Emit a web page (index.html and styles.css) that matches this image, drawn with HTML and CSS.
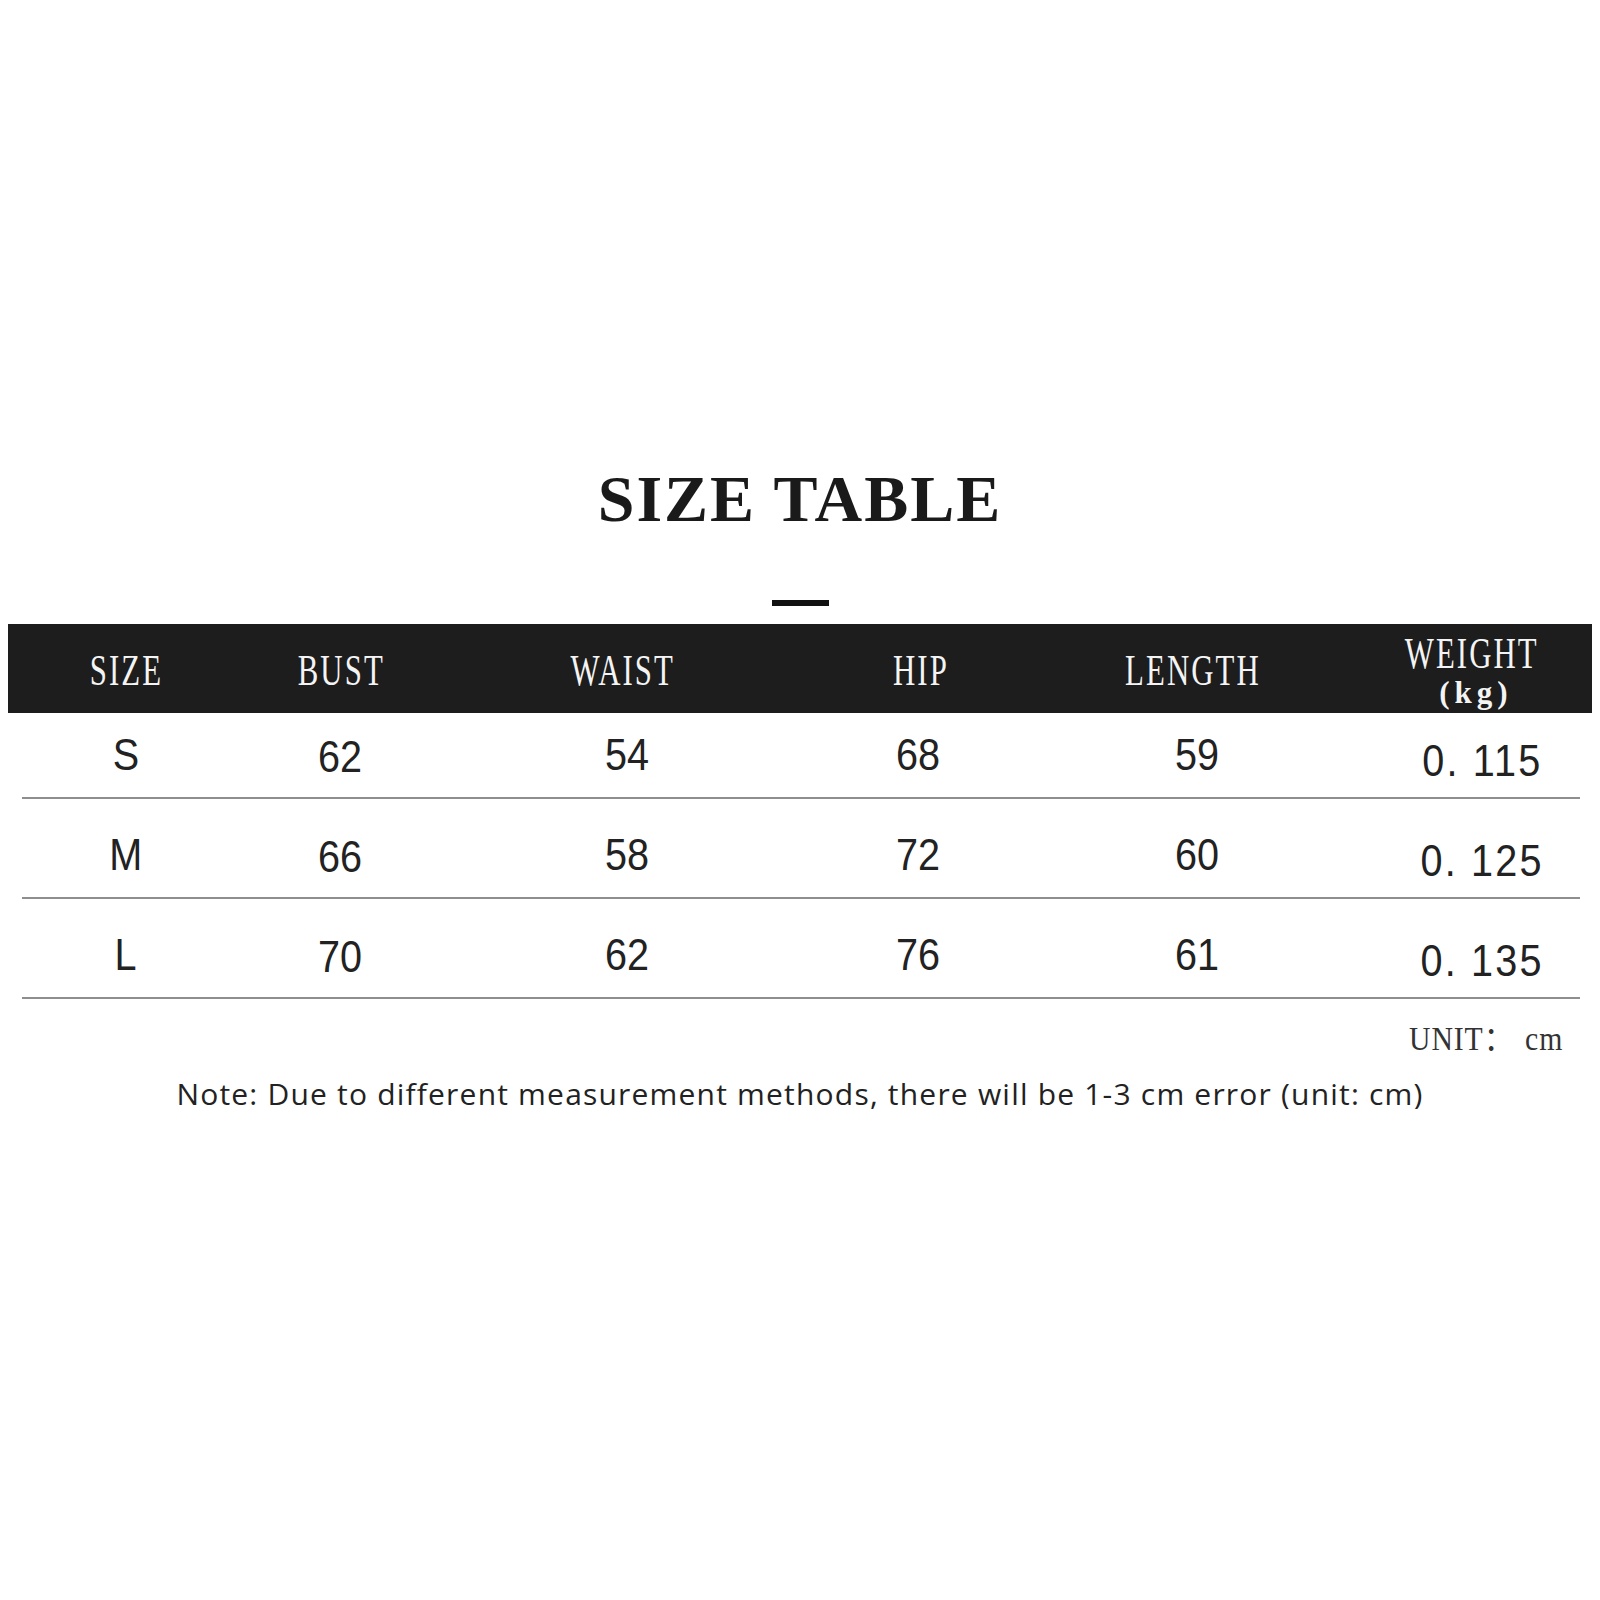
FILE: index.html
```html
<!DOCTYPE html>
<html lang="en">
<head>
<meta charset="utf-8">
<title>Size Table</title>
<link rel="stylesheet" href="styles.css">
</head>
<body>
<main class="sheet">
  <h1 class="title">SIZE TABLE</h1>
  <div class="dash"></div>
  <section class="table">
    <div class="thead">
      <div class="th"><span class="hd">SIZE</span></div>
      <div class="th"><span class="hd">BUST</span></div>
      <div class="th"><span class="hd">WAIST</span></div>
      <div class="th"><span class="hd">HIP</span></div>
      <div class="th"><span class="hd">LENGTH</span></div>
      <div class="th th-weight"><span class="hd w-top">WEIGHT</span><span class="hd w-unit">(kg)</span></div>
    </div>
    <div class="row row-first">
      <div class="td"><span class="num">S</span></div>
      <div class="td td-bust"><span class="num">62</span></div>
      <div class="td"><span class="num">54</span></div>
      <div class="td"><span class="num">68</span></div>
      <div class="td"><span class="num">59</span></div>
      <div class="td td-weight"><span class="num">0. 115</span></div>
    </div>
    <div class="row">
      <div class="td"><span class="num">M</span></div>
      <div class="td td-bust"><span class="num">66</span></div>
      <div class="td"><span class="num">58</span></div>
      <div class="td"><span class="num">72</span></div>
      <div class="td"><span class="num">60</span></div>
      <div class="td td-weight"><span class="num">0. 125</span></div>
    </div>
    <div class="row">
      <div class="td"><span class="num">L</span></div>
      <div class="td td-bust"><span class="num">70</span></div>
      <div class="td"><span class="num">62</span></div>
      <div class="td"><span class="num">76</span></div>
      <div class="td"><span class="num">61</span></div>
      <div class="td td-weight"><span class="num">0. 135</span></div>
    </div>
  </section>
  <div class="unit"><span class="unit-text">UNIT：<span class="unit-cm">cm</span></span></div>
  <p class="note">Note: Due to different measurement methods, there will be 1-3 cm error (unit: cm)</p>
</main>
</body>
</html>
```

FILE: styles.css
```css
html, body {
  background: #ffffff;
}

body {
  margin: 8px;
}

.sheet {
  width: 1584px;
  padding-top: 458px;
  display: flex;
  flex-direction: column;
}

.title {
  margin: 0;
  font-family: "Liberation Serif", "Times New Roman", serif;
  font-weight: bold;
  font-size: 66px;
  line-height: 66px;
  color: #1a1a1a;
  text-align: center;
  letter-spacing: 2px;
}

.dash {
  align-self: center;
  width: 57px;
  height: 6px;
  margin-top: 68px;
  background: #111111;
}

.table {
  margin-top: 18px;
  display: flex;
  flex-direction: column;
}

.thead {
  height: 89px;
  background: #1d1d1d;
  display: grid;
  grid-template-columns: 236px 194px 369px 227px 318px 240px;
  align-items: center;
}

.th {
  text-align: center;
  color: #f4f4f4;
  padding-top: 4px;
}

.hd {
  display: inline-block;
  font-family: "Liberation Serif", "Times New Roman", serif;
  font-size: 44px;
  line-height: 49px;
  letter-spacing: 3px;
  transform: scaleX(0.7);
  white-space: pre;
}

.th-weight {
  align-self: start;
  padding-top: 11px;
  display: flex;
  flex-direction: column;
  align-items: center;
}

.th-weight .w-top {
  line-height: 37px;
}

.th-weight .w-unit {
  margin-top: 4px;
  margin-left: 8px;
  font-size: 31px;
  font-weight: bold;
  line-height: 33px;
  letter-spacing: 5px;
  transform: none;
}

.row {
  margin: 0 12px 0 14px;
  height: 98px;
  border-bottom: 2px solid #8e8e8e;
  display: grid;
  grid-template-columns: 208px 221px 353px 228px 330px 218px;
  align-items: start;
}

.row-first {
  height: 84px;
}

.td {
  text-align: center;
  padding-top: 33px;
  color: #222222;
}

.row-first .td {
  padding-top: 19px;
}

.row .td-bust {
  padding-top: 35px;
}

.row-first .td-bust {
  padding-top: 21px;
}

.row .td-weight {
  padding-top: 39px;
  padding-left: 23px;
}

.row-first .td-weight {
  padding-top: 25px;
}

.num {
  display: inline-block;
  font-family: "Liberation Sans", Arial, sans-serif;
  font-size: 45px;
  line-height: 45px;
  transform: scaleX(0.88);
  white-space: pre;
}

.td-weight .num {
  letter-spacing: 2.5px;
}

.unit {
  margin-top: 21px;
  text-align: right;
  padding-right: 29px;
  color: #333333;
}

.unit-text {
  display: inline-block;
  font-family: "Liberation Serif", "Noto Sans CJK SC", serif;
  font-size: 33px;
  line-height: 38px;
  letter-spacing: 1px;
  transform: scaleX(0.9);
  transform-origin: right center;
  white-space: pre;
}

.unit-cm {
  margin-left: 12px;
}

.note {
  margin: 21px 0 0 0;
  font-family: "Open Sans", "Noto Sans", sans-serif;
  font-size: 30px;
  line-height: 30px;
  letter-spacing: 1.2px;
  color: #222222;
  text-align: center;
  white-space: nowrap;
}
```
